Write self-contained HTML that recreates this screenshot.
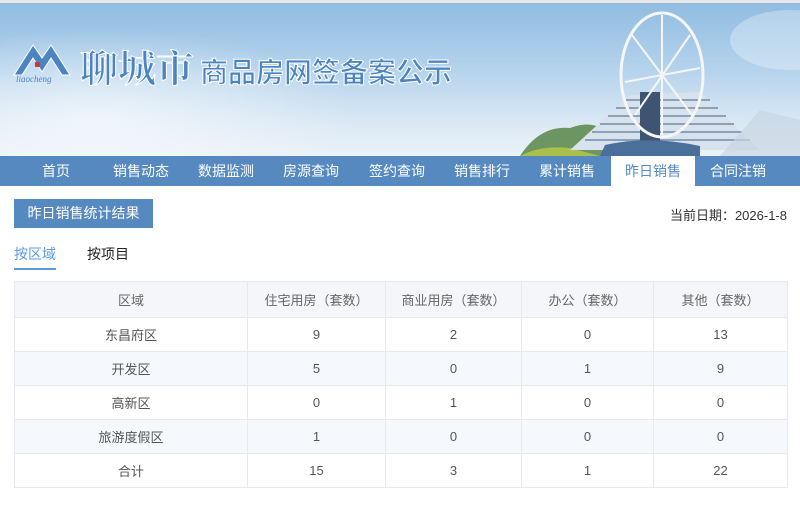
<!DOCTYPE html>
<html><head><meta charset="utf-8"><style>
*{margin:0;padding:0;box-sizing:border-box}
body{width:800px;height:512px;overflow:hidden;background:#fff;font-family:"Liberation Sans","Noto Sans CJK SC",sans-serif;position:relative}
.hdr{position:absolute;left:0;top:0;width:800px;height:156px;background:linear-gradient(180deg,#8fbbe0 0%,#b5d3ec 45%,#dce9f4 80%,#eaf2f8 100%);overflow:hidden}
.hdr:before{content:"";position:absolute;left:0;top:0;width:800px;height:3px;background:#e8e8e8}
.nav{position:absolute;left:0;top:156px;width:800px;height:30px;background:#5589c0;padding-left:14px}
.nav div{position:absolute;color:#fff;font-size:14px;line-height:30px;text-align:center;width:84px;top:0}
.nav div.a{background:#fff;color:#5589c0}
.btn{position:absolute;left:14px;top:199px;width:139px;height:29px;background:#5589c0;color:#fff;font-size:14px;line-height:29px;text-align:center}
.date{position:absolute;right:13px;top:205px;font-size:13px;color:#333}
.tab1{position:absolute;left:14px;top:244px;font-size:14px;color:#5b9be0}
.tab1:after{content:"";position:absolute;left:0;top:24px;width:42px;height:2px;background:#5b9be0}
.tab2{position:absolute;left:87px;top:244px;font-size:14px;color:#222}
table{position:absolute;left:14px;top:281px;width:774px;border-collapse:collapse;font-size:13px;color:#555}
td,th{border:1px solid #e6e9ef;text-align:center;height:34px;font-weight:normal}
th{background:#f4f6fa;height:36px;color:#666}
tr.s td{background:#f5f9fe}
</style></head><body>
<div class="hdr">
<svg width="800" height="156" style="position:absolute;left:0;top:0">
<defs><radialGradient id="c" cx="0.3" cy="0.6" r="0.5"><stop offset="0" stop-color="#fff" stop-opacity="0.6"/><stop offset="1" stop-color="#fff" stop-opacity="0"/></radialGradient></defs>
<ellipse cx="200" cy="100" rx="260" ry="90" fill="url(#c)"/>
<ellipse cx="790" cy="40" rx="60" ry="30" fill="#fff" opacity="0.3"/>
<path d="M520 156 Q540 125 570 128 Q590 120 605 130 L605 156Z" fill="#4f7f3c" opacity="0.8"/>
<path d="M520 156 Q540 145 570 148 L600 156Z" fill="#a9c04a"/>
<path d="M570 150 L630 95 L700 92 L760 150Z" fill="#d8e2ec"/>
<g stroke="#6f8ba8" stroke-width="1.5">
<line x1="585" y1="140" x2="750" y2="140"/><line x1="592" y1="132" x2="742" y2="132"/><line x1="600" y1="124" x2="734" y2="124"/><line x1="608" y1="116" x2="726" y2="116"/><line x1="616" y1="108" x2="718" y2="108"/><line x1="624" y1="100" x2="710" y2="100"/>
</g>
<rect x="640" y="92" width="20" height="55" fill="#3e5470"/>
<path d="M605 145 Q650 135 700 146 L700 156 L600 156Z" fill="#4a6f9a"/>
<ellipse cx="662" cy="75" rx="41" ry="62" fill="none" stroke="#f4f6f8" stroke-width="3"/>
<g stroke="#f4f6f8" stroke-width="2"><line x1="662" y1="15" x2="662" y2="135"/><line x1="625" y1="82" x2="700" y2="68"/><line x1="632" y1="35" x2="692" y2="115"/><line x1="690" y1="35" x2="635" y2="115"/></g>
<path d="M720 156 L760 110 L800 120 L800 156Z" fill="#c8d6e2" opacity="0.7"/>
<path d="M14 75 L33 45 L42 58 L51 45 L70 75 L62 75 L51 58 L42 72 L33 58 L22 75Z" fill="#4c84c2" stroke="#fff" stroke-width="1"/>
<rect x="35" y="62" width="5" height="5" fill="#d43a2a"/>
<text x="16" y="82" font-size="9" font-style="italic" fill="#4c84c2" font-family="Liberation Serif,serif">liaocheng</text>
<text x="80" y="82" font-size="38" font-weight="bold" fill="#4c84c2" stroke="#fff" stroke-width="1" font-family="Noto Serif CJK SC,serif">聊城市</text>
<text x="200" y="82" font-size="28" font-weight="bold" fill="#4c84c2" stroke="#fff" stroke-width="1" font-family="Noto Sans CJK SC,sans-serif">商品房网签备案公示</text>
</svg>
</div>
<div class="nav">
<div style="left:14px">首页</div><div style="left:99px">销售动态</div><div style="left:184px">数据监测</div><div style="left:269px">房源查询</div><div style="left:355px">签约查询</div><div style="left:440px">销售排行</div><div style="left:525px">累计销售</div><div class="a" style="left:611px">昨日销售</div><div style="left:696px">合同注销</div></div>
<div class="btn">昨日销售统计结果</div>
<div class="date">当前日期：2026-1-8</div>
<div class="tab1">按区域</div><div class="tab2">按项目</div>
<table>
<tr><th style="width:233px">区域</th><th style="width:138px">住宅用房（套数）</th><th style="width:136px">商业用房（套数）</th><th style="width:132px">办公（套数）</th><th>其他（套数）</th></tr>
<tr><td>东昌府区</td><td>9</td><td>2</td><td>0</td><td>13</td></tr>
<tr class="s"><td>开发区</td><td>5</td><td>0</td><td>1</td><td>9</td></tr>
<tr><td>高新区</td><td>0</td><td>1</td><td>0</td><td>0</td></tr>
<tr class="s"><td>旅游度假区</td><td>1</td><td>0</td><td>0</td><td>0</td></tr>
<tr><td>合计</td><td>15</td><td>3</td><td>1</td><td>22</td></tr>
</table>
</body></html>
